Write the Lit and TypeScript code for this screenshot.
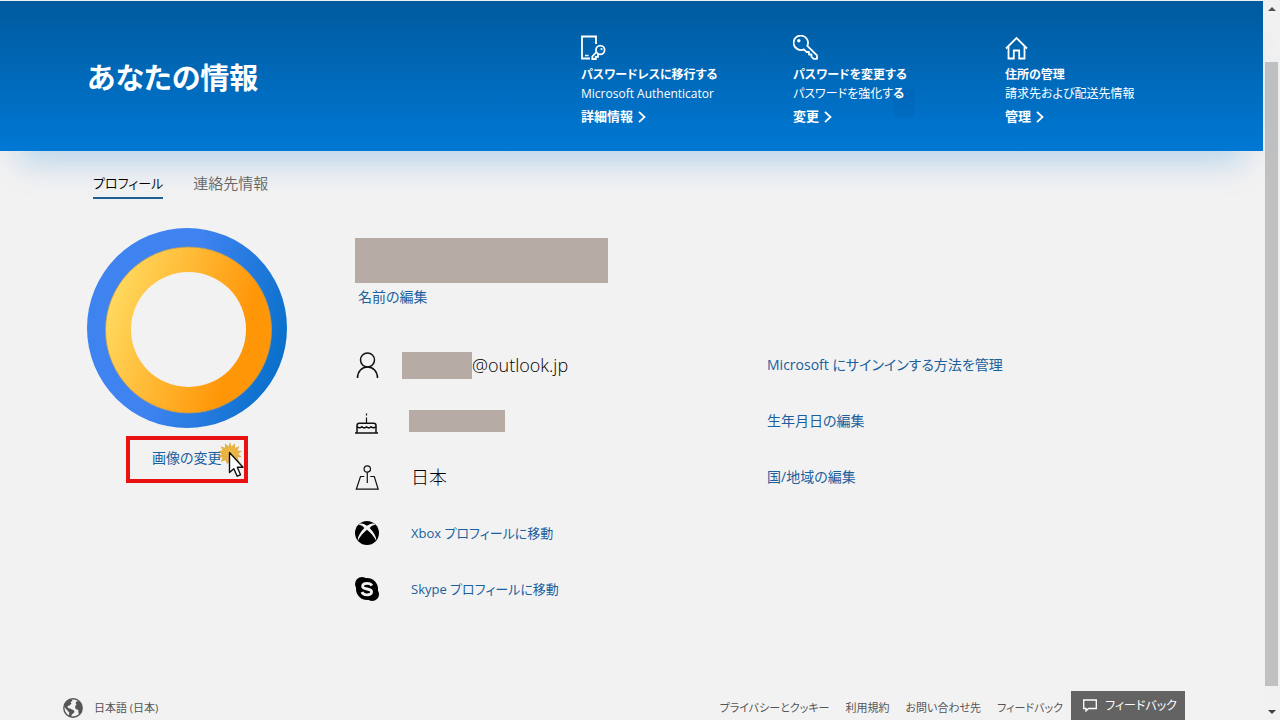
import { LitElement, html, css, svg } from "lit";
import { customElement } from "lit/decorators.js";

const phoneKey = svg`<svg width="26" height="26" viewBox="0 0 26 26" fill="none" stroke="currentColor" stroke-width="1.8">
  <path d="M15 9V1.500H1V23.500H9"/><path d="M4 20.500h3.500" stroke-width="1.500"/>
  <circle cx="19.300" cy="15" r="4.300"/><path d="M15.500 17 11.300 21.500V24H14.800V21.800H17V19"/><circle cx="20.500" cy="14" r="1.100" fill="currentColor" stroke="none"/></svg>`;
const bigKey = svg`<svg width="26" height="26" viewBox="0 0 26 26" fill="none" stroke="currentColor" stroke-width="1.8" stroke-linejoin="round">
  <path d="M14.300 10.900A7.200 7.200 0 1 0 10.900 14.300L13.500 17H16V19.500H18.500V21.800L20.700 23.800H24V20.400Z"/><circle cx="5.800" cy="5.800" r="1.700" fill="currentColor" stroke="none"/></svg>`;
const house = svg`<svg width="26" height="26" viewBox="0 0 26 26" fill="none" stroke="currentColor" stroke-width="1.8">
  <path d="M1 13.500 11.500 3 22 13.500"/><path d="M3.500 11.500V23.500H8.800V15.500H14.200V23.500H19.500V11.500"/></svg>`;
const chevron = svg`<svg width="8" height="12" viewBox="0 0 8 12" fill="none" stroke="currentColor" stroke-width="1.800"><path d="M1 .8 6.500 6 1 11.200"/></svg>`;

const person = svg`<svg width="24" height="26" viewBox="0 0 24 26" fill="none" stroke="#111" stroke-width="1.500"><circle cx="12.500" cy="8" r="7"/><path d="M2.500 26C2.500 19.500 7 15 12.500 15S22.500 19.500 22.500 26"/></svg>`;
const cake = svg`<svg width="24" height="26" viewBox="0 0 24 26" fill="none" stroke="#111" stroke-width="1.500"><path d="M0 25H23M2 25V17.500Q2 15.200 4.300 15.200H18.700Q21 15.200 21 17.500V25"/><path d="M2 18.500Q4.500 21 7 18.800 9.300 21 11.500 18.800 13.800 21 16 18.800 18.500 21 21 18.500"/><path d="M11.500 9.500V15M11.500 5.500V7.500" stroke-width="1.200"/></svg>`;
const place = svg`<svg width="24" height="26" viewBox="0 0 24 26" fill="none" stroke="#111" stroke-width="1.200"><circle cx="12.300" cy="5" r="3.200"/><path d="M12.300 8.200V19M9.300 12.500H5.500L1.300 25.200H23.200L19.300 12.500H15.300"/></svg>`;
const xbox = svg`<svg width="24" height="24" viewBox="0 0 24 24"><circle cx="12" cy="12" r="12" fill="#000"/><path d="M5 2.600C7.500 2 10 3.300 12 4.700 14 3.300 16.500 2 19 2.600L20.500 4.200C18.500 3.500 16.500 5 14.700 6.900 18 10.500 21.500 15 21.200 19.800 18.800 15.200 15.500 11.500 12 8.800 8.500 11.500 5.200 15.200 2.800 19.800 2.500 15 6 10.500 9.300 6.900 7.500 5 5.500 3.500 3.500 4.200Z" fill="#f2f2f2"/></svg>`;
const skype = svg`<svg width="24" height="24" viewBox="0 0 24 24"><circle cx="12" cy="12" r="11" fill="#000"/><circle cx="7" cy="7" r="7" fill="#000"/><circle cx="17.200" cy="17.200" r="6.800" fill="#000"/><path d="M16.800 8.600C16 6.800 14 6.300 12 6.300 9.500 6.300 7.600 7.300 7.600 9.200 7.600 13.200 16.600 10.800 16.600 14.800 16.600 16.800 14.500 17.800 12 17.800 9.700 17.800 7.700 17 7 15" fill="none" stroke="#f2f2f2" stroke-width="2.800"/></svg>`;
const globe = svg`<svg width="20" height="20" viewBox="0 0 20 20"><circle cx="10" cy="10" r="9.200" fill="#f2f2f2" stroke="#555" stroke-width="1.400"/><path d="M1.500 7.500C2.500 4 5 2 8.500 1.300L9.500 3 7.500 4 8.500 5.500 6.500 7.500 4.500 8 5 10 7 10.500 11 12.500 11.500 14 8.500 17 8.300 19 6 17.800 6.200 14.500 4 12 1.200 8.800ZM12.500 5 14 3 17 4 19 8V13L17.300 16 15.500 15.500 15.300 12 12.700 11 12 8.500 13.500 6.500Z" fill="#555"/></svg>`;
const bubble = svg`<svg width="14" height="13" viewBox="0 0 14 13" fill="none" stroke="#fff" stroke-width="1.300"><path d="M.700 1H13.300V9.500H5.500L3 12V9.500H.700Z"/></svg>`;
const cursor = svg`<svg class="cursor" width="28" height="40" viewBox="0 0 28 40">
  <defs><radialGradient id="burst"><stop offset="0" stop-color="#f3b62c"/><stop offset="1" stop-color="#dfa435"/></radialGradient></defs>
  <path d="M13 0 14.500 4.500 18 1.200 18 5.800 22.300 4.300 20.500 8.500 25 9 21.300 12 25 15 20.500 15.500 22.300 19.700 18 18.200 17 22 13 19.500 10 22 8.500 18.200 4 19.700 5.500 15.500 1 15 4.700 12 1 9 5.500 8.500 3.700 4.300 8 5.800 8 1.200 11.500 4.500Z" fill="url(#burst)" opacity=".9"/><path d="M12.500 10.500V30.500L16.800 26.700 20.200 34.200 23.500 32.800 20.300 25.300H26Z" fill="#fff" stroke="#111" stroke-width="1.400" stroke-linejoin="round"/></svg>`;

@customElement("app-root")
export class AppRoot extends LitElement {
  static styles = css`
    :host {
      display: block;
      font-family: "Open Sans", "Noto Sans CJK JP", sans-serif;
      font-feature-settings: "palt";
      font-size: 14px;
      line-height: 20px;
      color: #000;
    }
    * { box-sizing: border-box; }
    a { color: #1a5f9e; text-decoration: none; }
    svg { display: block; flex: none; }
    .window { display: flex; height: 100vh; background: #f2f2f2; overflow: hidden; }
    .page { position: relative; flex: 1; min-width: 0; display: flex; flex-direction: column; padding-top: 1px; }
    .hero {
      display: flex; justify-content: space-between; align-items: flex-start;
      padding: 34px 46px 25px 87px; color: #fff;
      background: linear-gradient(#005a9e, #0078d4);
      box-shadow: 0 28px 32px -18px rgba(0, 120, 212, 0.26);
    }
    .title { margin: 20px 0 0; font-size: 29px; line-height: 46px; font-weight: 700; }
    .cards { display: grid; grid-template-columns: repeat(3, 212px); }
    .card { font-size: 12px; line-height: 19px; }
    .card a { display: inline-flex; align-items: center; gap: 5px; margin-top: 4px; color: #fff; font-size: 13px; font-weight: 700; }
    .card h2 { margin: 4px 0 0; font-size: 12px; line-height: 19px; font-weight: 700; }
    .card p { position: relative; z-index: 0; margin: 0; }
    .card b { position: relative; }
    .card b::before { content: ""; position: absolute; left: 0; top: 4px; width: 22px; height: 28px; background: rgba(0, 90, 175, 0.25); z-index: -1; }
    .tabs { display: flex; gap: 30px; padding: 22px 93px 0; font-size: 13px; }
    .tab { color: #666; padding-bottom: 4px; border-bottom: 2px solid transparent; font-weight: 350; }
    .tab.current { color: #000; border-color: #1c5f94; }
    .tab.wide { font-size: 15px; }
    .profile { display: flex; gap: 68px; padding: 29px 87px 0; }
    .picture { width: 200px; flex: none; display: flex; flex-direction: column; align-items: center; gap: 8px; }
    .change {
      position: relative; display: block; width: 122px; padding: 8px 22px 11px; white-space: nowrap;
      border: 4px solid #e81212; line-height: 20px;
    }
    .cursor { position: absolute; left: 87px; top: 2px; }
    .details { flex: 1; padding-top: 10px; }
    .mask { background: #b6aca5; display: block; }
    .name { width: 253px; height: 45px; }
    .edit { display: block; margin: 4px 0 30px 3px; }
    .row { display: grid; grid-template-columns: 47px 365px 1fr; align-items: center; height: 56px; }
    .value { display: flex; align-items: center; font-size: 18px; line-height: 26px; font-weight: 300; }
    .value.inset { padding-left: 9px; }
    .value.inset a { font-size: 13px; font-weight: 400; }
    .address { width: 70px; height: 27px; }
    .birth { width: 96px; height: 22px; margin-left: 7px; }
    footer {
      margin-top: auto; display: flex; justify-content: space-between; align-items: center;
      padding: 0 200px 2px 63px; font-size: 11px;
    }
    footer a { color: #555; }
    .language { display: flex; align-items: center; gap: 11px; }
    .links { display: flex; gap: 16px; }
    .feedback {
      position: absolute; right: 78px; bottom: 0; display: flex; align-items: center; gap: 8px;
      height: 29px; padding: 0 8px 0 12px; border: 0; background: #636363; color: #fff; font: inherit;
      font-size: 12px; font-feature-settings: inherit; white-space: nowrap;
    }
    .scroll { width: 17px; padding: 0 2px; display: flex; flex-direction: column; align-items: center; background: #f1f1f1; }
    .arrow { height: 17px; display: grid; place-items: center; }
    .lane { flex: 1; width: 100%; padding: 45px 0 17px; display: flex; }
    .thumb { flex: 1; background: #c1c1c1; }
  `;

  private card(icon: unknown, title: string, text: unknown, link: string) {
    return html`<section class="card">${icon}<h2>${title}</h2><p>${text}</p><a href="#">${link}${chevron}</a></section>`;
  }

  render() {
    return html`<div class="window">
      <div class="page">
        <header class="hero">
          <h1 class="title">あなたの情報</h1>
          <div class="cards">
            ${this.card(phoneKey, "パスワードレスに移行する", "Microsoft Authenticator", "詳細情報")}
            ${this.card(bigKey, "パスワードを変更する", html`パスワードを強化す<b>る</b>`, "変更")}
            ${this.card(house, "住所の管理", "請求先および配送先情報", "管理")}
          </div>
        </header>
        <nav class="tabs"><a class="tab current" href="#">プロフィール</a><a class="tab wide" href="#">連絡先情報</a></nav>
        <main class="profile">
          <div class="picture">
            <svg width="200" height="200" viewBox="0 0 200 200">
              <defs>
                <linearGradient id="blue" x1="0" y1=".3" x2="1" y2=".6"><stop offset=".45" stop-color="#3f83f1"/><stop offset="1" stop-color="#0870ca"/></linearGradient>
                <linearGradient id="gold" x1="0" y1=".3" x2="1" y2=".65"><stop offset="0" stop-color="#ffdc62"/><stop offset=".8" stop-color="#ff9608"/></linearGradient>
              </defs>
              <circle cx="100" cy="100" r="100" fill="url(#blue)"/>
              <circle cx="101.500" cy="102" r="83" fill="url(#gold)" stroke="#b59a60" stroke-width=".8"/>
              <circle cx="101.500" cy="101.500" r="57.500" fill="#f2f2f2"/>
            </svg>
            <a class="change" href="#">画像の変更${cursor}</a>
          </div>
          <div class="details">
            <span class="mask name"></span>
            <a class="edit" href="#">名前の編集</a>
            <div class="row">${person}<span class="value"><span class="mask address"></span>@outlook.jp</span><a href="#">Microsoft にサインインする方法を管理</a></div>
            <div class="row">${cake}<span class="value"><span class="mask birth"></span></span><a href="#">生年月日の編集</a></div>
            <div class="row">${place}<span class="value inset">日本</span><a href="#">国/地域の編集</a></div>
            <div class="row">${xbox}<span class="value inset"><a href="#">Xbox プロフィールに移動</a></span></div>
            <div class="row">${skype}<span class="value inset"><a href="#">Skype プロフィールに移動</a></span></div>
          </div>
        </main>
        <footer>
          <a class="language" href="#">${globe}日本語 (日本)</a>
          <div class="links"><a href="#">プライバシーとクッキー</a><a href="#">利用規約</a><a href="#">お問い合わせ先</a><a href="#">フィードバック</a></div>
        </footer>
        <button class="feedback" type="button">${bubble}フィードバック</button>
      </div>
      <div class="scroll">
        <span class="arrow"><svg width="8" height="4" viewBox="0 0 8 4"><path d="M0 4 4 0 8 4Z" fill="#505050"/></svg></span>
        <div class="lane"><span class="thumb"></span></div>
        <span class="arrow"><svg width="8" height="4" viewBox="0 0 8 4"><path d="M0 0 4 4 8 0Z" fill="#404040"/></svg></span>
      </div>
    </div>`;
  }
}
